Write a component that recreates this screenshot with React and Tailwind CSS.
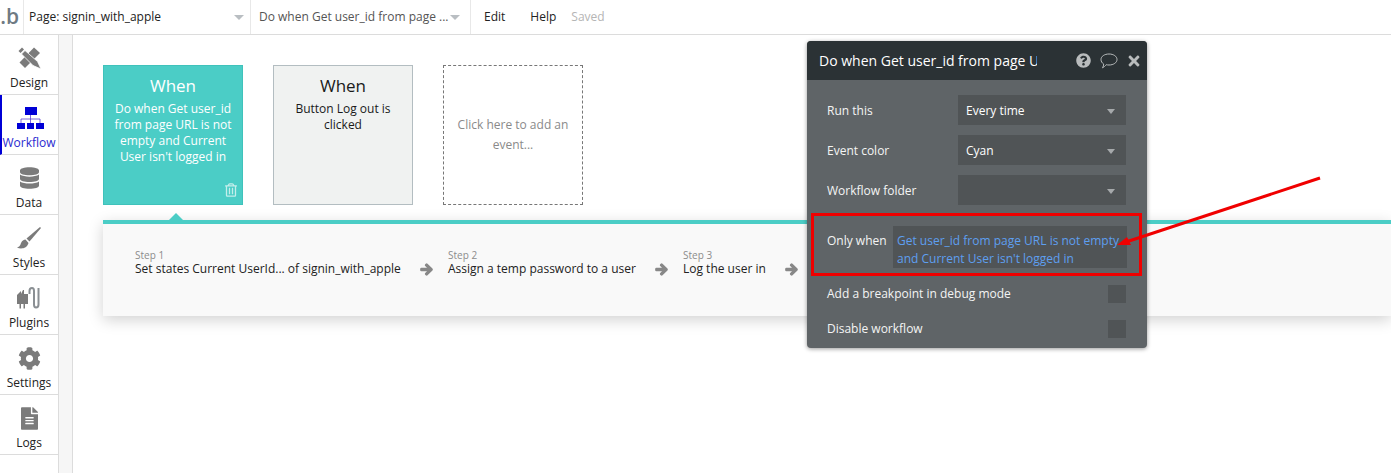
import { FaDatabase, FaCog, FaFileAlt, FaArrowRight, FaQuestionCircle, FaTimes, FaRegTrashAlt } from "react-icons/fa";

const DesignIcon = ({ className }) => (
  <svg viewBox="0 0 23 22" className={className} fill="#7b7b7b">
    {/* ruler */}
    <path d="M16 0.500 L22 6 L7 21 L1.500 15.500 Z" />
    {/* pencil */}
    <path d="M4 0.500 L0.500 4 L2.500 6 L6 2.500 Z" />
    <path d="M7 3.500 L3.500 7 L15 18.500 L23 22 L19.500 14.500 Z" stroke="#fff" strokeWidth="0.800" />
  </svg>
);

const WorkflowIcon = ({ className }) => (
  <svg viewBox="0 0 27 22" className={className} fill="#0000d6">
    <rect x="8" y="0" width="12" height="8" />
    <rect x="0" y="16" width="8" height="6" />
    <rect x="10" y="16" width="7" height="6" />
    <rect x="19" y="16" width="8" height="6" />
    <path d="M13.500 8 V16 M4 16 V12 H23 V16" fill="none" stroke="#5a3fd0" strokeWidth="0.800" />
  </svg>
);

const BrushIcon = ({ className }) => (
  <svg viewBox="0 0 24 22" className={className} fill="#7b7b7b">
    <path d="M23 0 L24 1 L12.500 14.500 L9.500 11.500 Z" />
    <path d="M8.500 12.500 C5 13 4.500 15 3.500 17.500 C3 19 1.500 20 0 20.500 C4 22.500 10 21.500 11.500 16 Z" />
  </svg>
);

const PluginIcon = ({ className }) => (
  <svg viewBox="0 0 24 22" className={className} fill="none">
    <path d="M0 8 L4 4 V7 L6 3 H7 V7 H11 V17 H8 V21.500 H6.500 V17 H4 V21.500 H2.500 V17 H0 Z" fill="#7b7b7b" />
    <path d="M12.500 7 V4 Q12.500 1 15 1 Q17 1 17 4 V17.500 Q17 20.500 19 20.500 Q21.500 20.500 21.500 17.500 V1" stroke="#8a8f93" strokeWidth="2" />
  </svg>
);

const CommentIcon = ({ className }) => (
  <svg viewBox="0 0 18 16" className={className} fill="none">
    <path
      d="M9 1 C13.500 1 17 3.300 17 6.500 C17 9.700 13.500 12 9 12 C8 12 7 11.900 6.200 11.700 C5.200 13 3.800 14.300 2.500 14.800 C3.300 13.600 3.700 12.400 3.700 11 C2 10 1 8.400 1 6.500 C1 3.300 4.500 1 9 1 Z"
      stroke="#b9bcbd"
      strokeWidth="1"
    />
  </svg>
);

const navItems = [
  { label: "Design", icon: <DesignIcon className="w-[23px] h-[22px]" /> },
  { label: "Workflow", icon: <WorkflowIcon className="w-[27px] h-[22px]" />, active: true },
  { label: "Data", icon: <FaDatabase className="w-[19px] h-[22px]" /> },
  { label: "Styles", icon: <BrushIcon className="w-[24px] h-[22px]" /> },
  { label: "Plugins", icon: <PluginIcon className="w-[24px] h-[22px]" /> },
  { label: "Settings", icon: <FaCog className="w-[23px] h-[23px]" /> },
  { label: "Logs", icon: <FaFileAlt className="w-[17px] h-[23px]" /> },
];

const steps = [
  { step: "Step 1", text: "Set states Current UserId... of signin_with_apple", width: "w-[285px]" },
  { step: "Step 2", text: "Assign a temp password to a user", width: "w-[207px]" },
  { step: "Step 3", text: "Log the user in", width: "w-[102px]" },
];

const SideBar = () => (
  <div className="w-[59px] shrink-0 border-r border-[#dcdcdc] bg-white">
    {navItems.map((item) => (
      <div
        key={item.label}
        className={`h-[60px] border-b border-[#dcdcdc] flex flex-col items-center pt-[10px] ${
          item.active ? "border-l-2 border-l-[#0000d6] text-[#0000d6]" : "text-[#7b7b7b]"
        }`}
      >
        <div className="h-[26px] flex items-center justify-center">{item.icon}</div>
        <div className={`text-[12px] leading-[17px] mt-[3px] ${item.active ? "text-[#2a2ad0] -ml-[2px]" : "text-[#222]"}`}>
          {item.label}
        </div>
      </div>
    ))}
  </div>
);

const PanelSelect = ({ label, value }) => (
  <div className="flex items-center h-[30px] mb-[10px]">
    <div className="w-[131px] pt-[2px] text-[12px] text-[#f4f4f4]">{label}</div>
    <div className="w-[168px] h-[30px] bg-[#505456] flex items-center justify-between pl-[8px] pr-[11px] pt-[2px] text-[12px] text-white">
      <span>{value}</span>
      <span className="w-0 h-0 border-x-[4.500px] border-x-transparent border-t-[5px] border-t-[#a6a9ab]" />
    </div>
  </div>
);

const PanelCheck = ({ label }) => (
  <div className="flex items-center justify-between h-[18px] pr-[21px] text-[12px] text-[#f4f4f4]">
    <span>{label}</span>
    <span className="w-[18px] h-[18px] bg-[#505456]" />
  </div>
);

export default function App() {
  return (
    <div className="w-[1391px] h-[473px] overflow-hidden relative bg-white flex flex-col font-['Open_Sans',sans-serif]">
      <div className="h-[35px] shrink-0 border-b border-[#dcdcdc] flex items-center text-[12px] text-[#333]">
        <div className="w-[24px] h-full border-r border-[#e8e8e8] flex items-center justify-end pr-[4px] text-[21px] font-semibold text-[#6f7a83]">
          .b
        </div>
        <div className="w-[227px] h-full border-r border-[#e8e8e8] flex items-center justify-between pl-[5px] pr-[6px]">
          <span className="text-[#222]">Page: signin_with_apple</span>
          <span className="w-0 h-0 border-x-[5px] border-x-transparent border-t-[5px] border-t-[#b9bec2]" />
        </div>
        <div className="w-[220px] h-full border-r border-[#e8e8e8] flex items-center justify-between pl-[8px] pr-[10px]">
          <span className="text-[#555]">Do when Get user_id from page ...</span>
          <span className="w-0 h-0 border-x-[5px] border-x-transparent border-t-[5px] border-t-[#b9bec2]" />
        </div>
        <span className="ml-[13px] text-[#222]">Edit</span>
        <span className="ml-[25px] text-[#222]">Help</span>
        <span className="ml-[15px] text-[#b5b5b5]">Saved</span>
      </div>

      <div className="flex flex-1 min-h-0">
        <SideBar />
        <div className="w-[14px] shrink-0 bg-[#f6f6f6] border-r border-[#dcdcdc]" />

        <div className="flex-1 min-w-0 pt-[30px] pl-[30px]">
          <div className="flex gap-[30px]">
            <div className="w-[140px] h-[140px] bg-[#4bcdc6] border border-[#3fc2bb] flex flex-col items-center text-white text-center pt-[8px] px-[8px]">
              <div className="text-[17px] leading-[24px]">When</div>
              <div className="text-[12px] leading-[16px] mt-[3px]">
                Do when Get user_id from page URL is not empty and Current User isn't logged in
              </div>
              <FaRegTrashAlt className="self-end mt-[18px] -mr-[3px] w-[12px] h-[14px] text-[#c4eeeb]" />
            </div>
            <div className="w-[140px] h-[140px] bg-[#f0f2f1] border border-[#b3bdc1] flex flex-col items-center text-[#1a1a1a] text-center pt-[8px] px-[8px]">
              <div className="text-[17px] leading-[24px]">When</div>
              <div className="text-[12px] leading-[16px] mt-[3px] px-[10px]">Button Log out is clicked</div>
            </div>
            <div className="w-[140px] h-[140px] border border-dashed border-[#777] flex items-center justify-center text-center px-[8px] text-[12px] leading-[20px] text-[#8a8a8a]">
              Click here to add an event...
            </div>
          </div>

          <div className="relative mt-[15px] h-[96px] border-t-4 border-[#4bcdc6] bg-[#f9f9f9] shadow-[0_4px_14px_rgba(0,0,0,0.18)] flex items-start pl-[32px] pt-[25px]">
            <span className="absolute left-[66px] -top-[11px] w-0 h-0 border-x-[7px] border-x-transparent border-b-[7px] border-b-[#4bcdc6]" />
            {steps.map((item) => (
              <div key={item.step} className="flex items-center">
                <div className={item.width}>
                  <div className="text-[10px] leading-[12px] text-[#8c8c8c]">{item.step}</div>
                  <div className="text-[12px] leading-[16px] text-[#222] whitespace-nowrap">{item.text}</div>
                </div>
                <FaArrowRight
                  stroke="currentColor"
                  strokeWidth={50}
                  className="w-[13px] h-[13px] mt-[12px] mr-[15px] text-[#888]"
                />
              </div>
            ))}
          </div>
        </div>
      </div>

      {/* property editor floats over the canvas */}
      <div className="absolute left-[807px] top-[41px] w-[340px] h-[307px] rounded-[4px] bg-[#5f6467] shadow-[0_1px_4px_rgba(0,0,0,0.4)] overflow-hidden">
        <div className="h-[39px] bg-[#2b3235] flex items-center pl-[12px] pr-[6px] text-white">
          <span className="w-[218px] h-[20px] leading-[20px] text-[14px] overflow-hidden whitespace-nowrap">
            Do when Get user_id from page URL
          </span>
          <div className="ml-auto flex items-center gap-[9px] text-[#b9bcbd]">
            <FaQuestionCircle className="w-[15px] h-[15px]" />
            <CommentIcon className="w-[18px] h-[16px]" />
            <FaTimes className="w-[14px] h-[16px]" />
          </div>
        </div>
        <div className="pt-[15px] pl-[20px]">
          <PanelSelect label="Run this" value="Every time" />
          <PanelSelect label="Event color" value="Cyan" />
          <PanelSelect label="Workflow folder" value="" />
          <div className="flex items-start mt-[21px] h-[42px]">
            <div className="w-[66px] pt-[6px] text-[12px] text-[#f4f4f4]">Only when</div>
            <div className="w-[234px] h-[42px] bg-[#505456] px-[4px] pt-[6px] text-[12px] leading-[18px] text-[#5e9ff0]">
              Get user_id from page URL is not empty and Current User isn't logged in
            </div>
          </div>
          <div className="mt-[17px]">
            <PanelCheck label="Add a breakpoint in debug mode" />
          </div>
          <div className="mt-[17px]">
            <PanelCheck label="Disable workflow" />
          </div>
        </div>
      </div>

      {/* annotation added on top of the screenshot */}
      <div className="absolute left-[811px] top-[213px] w-[331px] h-[63px] border-[3px] border-[#f00000]" />
      <svg className="absolute left-[1110px] top-[170px] w-[220px] h-[85px]" viewBox="0 0 220 85">
        <path d="M210 8 L16 72" stroke="#f00000" strokeWidth="3" />
        <path d="M7 75 L17 67 L21 75 Z" fill="#f00000" />
      </svg>
    </div>
  );
}
